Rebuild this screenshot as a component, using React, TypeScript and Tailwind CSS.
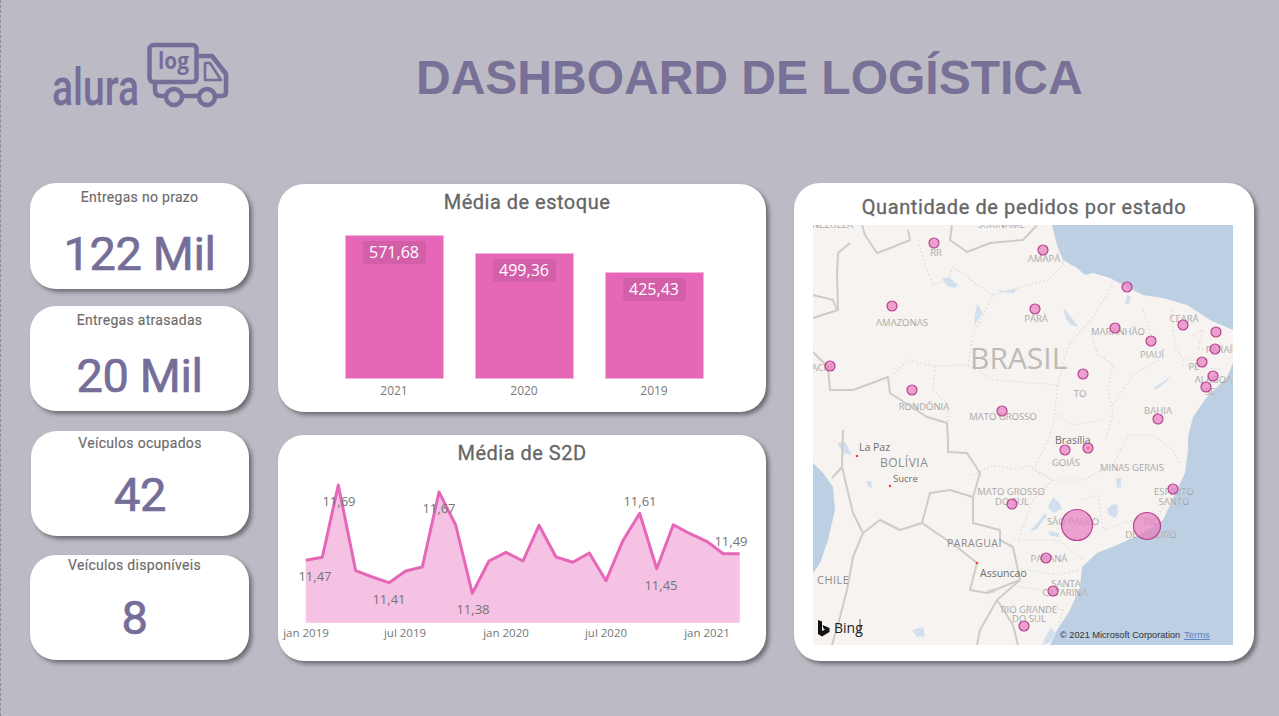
import React from "react";

function KpiCard({ label, value, cls, labelCls, valueCls }: { label: string; value: string; cls: string; labelCls: string; valueCls: string }) {
  return (
    <div className={`bg-white rounded-[26px] shadow-[3px_3px_4px_rgba(0,0,0,0.42)] flex flex-col items-center ${cls}`}>
      <div className={`text-[14px] leading-[16px] tracking-[0.3px] text-[#6e6a6a] font-['Roboto',sans-serif] [-webkit-text-stroke:0.15px_#6e6a6a] ${labelCls}`}>{label}</div>
      <div className={`text-[47px] leading-[56px] text-[#756e99] font-['Roboto',sans-serif] tracking-[-0.4px] [-webkit-text-stroke:0.7px_#756e99] ${valueCls}`}>{value}</div>
    </div>
  );
}

function Bar({ h, value, year }: { h: string; value: string; year: string }) {
  return (
    <div className="flex flex-col items-center justify-end w-[99px]">
      <div className={`w-[99px] bg-[#e667b8] border border-[#f3b5dc] flex justify-center pt-[5px] ${h}`}>
        <div className="w-[63px] h-[23px] rounded-[3px] bg-[#d35fa9] text-white text-[16px] leading-[23px] text-center font-['Open_Sans',sans-serif]">{value}</div>
      </div>
      <div className="mt-[4px] h-[16px] text-[12px] leading-[16px] text-[#7a7a7a] font-['Open_Sans',sans-serif]">{year}</div>
    </div>
  );
}

const zp: [number, number][] = [
  [107, 391], [157, 382], [205, 165], [257, 422], [307, 441], [357, 458], [407, 423], [457, 411], [507, 186], [557, 285],
  [607, 490], [657, 393], [708, 367], [759, 393], [807, 286], [858, 381], [908, 397], [958, 369], [1008, 452], [1058, 333],
  [1109, 250], [1160, 416], [1210, 284], [1260, 311], [1310, 334], [1360, 371], [1409, 371],
];
const pts = zp.map(([x, y]) => `${(x / 3 - 8).toFixed(1)},${(y / 3 - 5).toFixed(1)}`).join(" ");

function LineChart() {
  const labels: [string, number, number][] = [
    ["11,69", 61, 71], ["11,47", 37, 146], ["11,41", 111, 169], ["11,67", 161, 78], ["11,38", 195, 179],
    ["11,61", 362, 71], ["11,45", 383, 155], ["11,49", 453, 111],
  ];
  const ticks: [string, number][] = [["jan 2019", 28], ["jul 2019", 127], ["jan 2020", 228], ["jul 2020", 328], ["jan 2021", 429]];
  return (
    <svg width="488" height="190" viewBox="0 36 488 190" className="block">
      <polygon points={`27.7,187.7 ${pts} 461.7,187.7`} fill="#f5c2e3" />
      <polyline points={pts} fill="none" stroke="#e667b8" strokeWidth="3" strokeLinejoin="round" />
      {labels.map(([t, x, y]) => (
        <text key={t} x={x} y={y} textAnchor="middle" fontSize="13" fill="#747474" fontFamily="Open Sans, sans-serif">{t}</text>
      ))}
      {ticks.map(([t, x]) => (
        <text key={t} x={x} y={202} textAnchor="middle" fontSize="11.5" fill="#777" fontFamily="Open Sans, sans-serif">{t}</text>
      ))}
    </svg>
  );
}

function MapSvg() {
  const bubbles: [number, number, number][] = [
    [121, 18, 5], [230, 25, 5], [314, 62, 5], [79, 81, 5], [222, 84, 5], [302, 103, 5], [370, 100, 5], [403, 107, 5],
    [338, 116, 5], [402, 124, 5], [389, 137, 5], [400, 151, 5], [393, 162, 5], [270, 149, 5], [17, 141, 5], [99, 165, 5],
    [189, 186, 5], [345, 194, 5], [252, 225, 5], [275, 223, 5], [360, 264, 5], [199, 279, 5], [264, 300, 15.5], [334, 301, 13.5],
    [233, 333, 5], [240, 366, 5], [211, 401, 5],
  ];
  const labels: [string, number, number][] = [
    ["RR", 123, 31], ["AMAPÁ", 231, 37], ["AMAZONAS", 89, 101], ["PARÁ", 223, 97], ["MARANHÃO", 305, 110], ["CEARÁ", 371, 97], ["PIAUÍ", 339, 133],
    ["PARAÍBA", 412, 128], ["PE", 381, 145], ["ALAGOAS", 403, 158], ["SE", 397, 170], ["TO", 267, 172], ["BAHIA", 345, 189], ["RONDÔNIA", 111, 185],
    ["MATO GROSSO", 190, 195], ["ACRE", 10, 146], ["GOIÁS", 253, 241], ["MINAS GERAIS", 319, 246], ["MATO GROSSO", 198, 270], ["DO SUL", 199, 280],
    ["ESPÍRITO", 361, 270], ["SANTO", 361, 280], ["SÃO PAULO", 260, 300], ["RIO", 339, 300], ["DE JANEIRO", 338, 313], ["PARANÁ", 236, 337], ["SANTA", 253, 362],
    ["CATARINA", 252, 371], ["RIO GRANDE", 216, 388], ["DO SUL", 216, 397], ["SURINAME", 188, 3], ["VENEZUELA", 14, 3],
  ];
  return (
    <svg width="420" height="420" viewBox="0 0 420 420" className="block ml-[-2px]">
      <rect width="420" height="420" fill="#f6f3f0" />
      <path d="M239 0 L244 20 L250 35 L264 43 L272 50 L280 48 L297 53 L314 62 L330 70 L350 73 L374 80 L397 95 L420 105 L420 0 Z" fill="#bdcfe3" />
      <path d="M420 138 L414 152 L394 172 L380 192 L375 212 L375 225 L372 248 L364 265 L350 295 L330 308 L304 320 L284 328 L269 342 L267 362 L257 385 L244 405 L237 420 L420 420 Z" fill="#bdcfe3" />
      <path d="M0 238 L10 248 L20 262 L22 285 L15 315 L7 338 L0 348 Z" fill="#bdcfe3" />
      <g fill="#d2e0ee">
        <path d="M129 54 L136 52 L145 60 L142 63 L134 61 Z" />
        <path d="M185 64 L190 66 L197 65 L204 63 L201 68 L187 67 Z" />
        <path d="M164 78 L170 88 L164 96 L161 102 L162 90 Z" />
        <path d="M250 82 L258 92 L266 102 L258 100 L253 94 Z" />
        <path d="M314 70 L318 72 L316 79 L312 79 Z" />
        <path d="M340 163 L350 157 L358 151 L352 158 L344 164 Z" />
        <path d="M24 218 L32 217 L37 226 L39 230 L30 228 Z" />
        <path d="M53 256 L58 256 L59 263 L55 261 Z" />
        <path d="M240 272 L246 277 L249 284 L240 288 L235 282 Z" />
        <path d="M232 288 L234 291 L223 305 L217 306 L226 296 Z" />
        <path d="M298 280 L304 279 L305 287 L303 293 L296 290 L294 285 Z" />
        <path d="M303 253 L308 253 L308 262 L304 263 Z" />
        <path d="M235 306 L246 308 L246 312 L238 311 Z" />
        <path d="M99 405 L110 402 L112 411 L104 412 Z" />
        <path d="M174 365 L183 363 L182 368 L176 368 Z" />
        <path d="M238 403 L243 408 L236 418 L229 420 L233 411 Z" />
      </g>
      <g fill="none" stroke="#cfccc8" strokeWidth="2" strokeLinejoin="round" className="blur-[0.4px]">
        <path d="M49 0 L52 10 L64 28 L80 22 L97 15 L95 5" />
        <path d="M37 18 L25 28 L24 50 L25 85 L0 93" />
        <path d="M0 70 L20 75 L24 85" />
        <path d="M139 0 L137 15 L154 27 L177 18 L210 15 L224 0" />
        <path d="M0 127 L15 142 L17 165 L40 165 L75 152 L77 168 L114 192 L134 198 L135 215 L135 227 L154 228 L167 248 L160 272 L137 265 L117 268 L109 298 L144 322 L164 338 L157 365 L174 368 L207 355 L200 322 L187 315 L187 305 L160 298 L160 272" />
        <path d="M30 205 L29 242 L40 288 L50 308 L67 295 L87 305 L109 298" />
        <path d="M29 242 L19 253" />
        <path d="M50 308 L40 332 L34 365 L27 392 L19 420" />
        <path d="M207 355 L184 375 L167 405 L164 420" />
        <path d="M184 375 L200 400 L205 420" />
      </g>
      <g fill="none" stroke="#dcd8d4" strokeWidth="1.2" strokeDasharray="1.5 2.5">
        <path d="M105 15 L112 40 L120 60 L135 55 L140 42 L165 60 L180 70 L160 110 L155 140 L120 141 L95 135 L80 150" />
        <path d="M180 70 L215 60 L235 55 L250 40 L250 10" />
        <path d="M155 140 L180 155 L245 160 L255 120 L278 95 L300 60" />
        <path d="M278 110 L285 130 L300 140 L295 165 L300 190 L292 215" />
        <path d="M330 85 L335 100 L345 135 L320 150 L300 180" />
        <path d="M358 85 L362 120 L370 135 L395 135" />
        <path d="M380 110 L390 105 L385 125 L410 120" />
        <path d="M370 140 L410 145 M385 155 L400 170" />
        <path d="M122 141 L120 165 L135 180 L135 198" />
        <path d="M245 160 L240 200 L235 215 L220 245 L240 255" />
        <path d="M245 190 L260 200 L290 195" />
        <path d="M160 250 L180 240 L205 245 L215 240 L240 255 L270 255 L300 240 L315 210 L340 210 L360 225 L368 240" />
        <path d="M240 255 L220 275 L205 315 L245 315 L270 335" />
        <path d="M285 270 L290 305 L320 295 L345 290 L362 265" />
        <path d="M270 275 L285 270" />
        <path d="M200 343 L245 350 L265 345 M205 362 L258 368" />
        <path d="M210 380 L250 385 L245 400" />
      </g>
      <g fontFamily="Open Sans, sans-serif" fill="#8b8b8b">
        {labels.map(([t, x, y], i) => (
          <text key={i} x={x} y={y} textAnchor="middle" fontSize="9.5" stroke="#f6f3f0" strokeWidth="0.2">{t}</text>
        ))}
        <text x="157" y="144" fontSize="30" fill="#bdbbb9">BRASIL</text>
        <text x="67" y="242" fontSize="12" letterSpacing="0.5" fill="#8c8c8c">BOLÍVIA</text>
        <text x="134" y="322" fontSize="10.5" letterSpacing="0.5" fill="#8c8c8c">PARAGUAI</text>
        <text x="4" y="359" fontSize="11" letterSpacing="0.5" fill="#8c8c8c">CHILE</text>
        <text x="46" y="226" fontSize="10.5" fill="#6e6e6e">La Paz</text>
        <text x="80" y="257" fontSize="9.5" fill="#6e6e6e">Sucre</text>
        <text x="167" y="352" fontSize="10.5" fill="#6e6e6e">Assuncao</text>
        <text x="242" y="219" fontSize="10.5" fill="#6e6e6e">Brasília</text>
      </g>
      <g fill="#f0473a">
        <circle cx="44" cy="231" r="1.3" />
        <circle cx="77" cy="261" r="1.3" />
        <circle cx="164" cy="338" r="1.3" />
      </g>
      {bubbles.map(([x, y, r], i) => (
        <circle key={i} cx={x} cy={y} r={r} fill="#e67fc2" fillOpacity="0.72" stroke="#b8418f" strokeWidth="1.2" />
      ))}
      <circle cx="275" cy="223" r="1" fill="#f0473a" />
      <path d="M5 395 L9 396.5 L9 406 L12 404.5 L10.5 403.5 L9.5 400 L16.5 403 L16.5 407 L9 411.5 L5 409 Z" fill="#111" />
      <text x="21" y="408" fontSize="14" fill="#222" fontFamily="Open Sans, sans-serif">Bing</text>
      <path d="M47 394 V409" stroke="#333" strokeWidth="0.8" />
      <text x="247" y="413" fontSize="9.2" fill="#333" fontFamily="Liberation Sans, sans-serif">© 2021 Microsoft Corporation</text>
      <text x="371" y="413" fontSize="9.5" fill="#5c7fbf" textDecoration="underline" fontFamily="Liberation Sans, sans-serif">Terms</text>
    </svg>
  );
}

function Logo() {
  return (
    <svg width="182" height="70" viewBox="50 40 182 70" className="block shrink-0">
      <g fill="none" stroke="#756e99" strokeWidth="4.5" strokeLinejoin="round" strokeLinecap="round">
        <rect x="149.5" y="45" width="47" height="37" rx="4" />
        <path d="M198 56 H212 L226 74 V92 Q226 96 222 96 H216" />
        <path d="M155 84 V90 Q155 96 161 96 H165 M183 96 H198" />
        <circle cx="174" cy="97" r="8" />
        <circle cx="207" cy="97" r="8" />
        <path d="M205 63 H210 L221 80 H205 Z" strokeWidth="2.5" />
      </g>
      <text x="158" y="69" fontSize="23" fontWeight="700" fill="#756e99" fontFamily="Open Sans, sans-serif" textLength="31" lengthAdjust="spacingAndGlyphs">log</text>
      <text x="52" y="105" fontSize="52" fontWeight="500" fill="#756e99" fontFamily="Roboto, sans-serif" textLength="87" lengthAdjust="spacingAndGlyphs">alura</text>
    </svg>
  );
}

export default function App() {
  return (
    <div className="w-[1279px] h-[716px] bg-[#bcbac4] overflow-hidden border-l border-dashed border-[#8f8d99] flex flex-col">
      <header className="h-[183px] flex items-start pl-[49px] pt-[40px] shrink-0">
        <Logo />
        <h1 className="ml-[184px] mt-[10px] text-[48px] leading-[56px] font-bold text-[#787096] font-['Liberation_Sans',sans-serif] whitespace-nowrap">DASHBOARD DE LOGÍSTICA</h1>
      </header>
      <main className="flex items-start pl-[29px]">
        <div className="w-[219px] flex flex-col shrink-0">
          <KpiCard label="Entregas no prazo" value="122 Mil" cls="h-[106px]" labelCls="mt-[6px]" valueCls="mt-[21px]" />
          <KpiCard label="Entregas atrasadas" value="20 Mil" cls="h-[105px] mt-[17px]" labelCls="mt-[6px]" valueCls="mt-[20px]" />
          <KpiCard label="Veículos ocupados" value="42" cls="h-[105px] mt-[20px] ml-[1px]" labelCls="mt-[4px]" valueCls="mt-[16px]" />
          <KpiCard label="Veículos disponíveis" value="8" cls="h-[105px] mt-[19px] pr-[10px]" labelCls="mt-[2px]" valueCls="mt-[17px]" />
        </div>
        <div className="w-[488px] ml-[29px] mt-[1px] flex flex-col shrink-0">
          <section className="h-[228px] bg-white rounded-[26px] shadow-[3px_3px_4px_rgba(0,0,0,0.42)] flex flex-col">
            <h2 className="h-[34px] pt-[4px] text-center text-[20px] leading-[28px] tracking-[0.5px] text-[#666] font-['Roboto',sans-serif] [-webkit-text-stroke:0.3px_#666] ml-[10px]">Média de estoque</h2>
            <div className="h-[181px] flex items-end justify-center gap-[31px] pl-[4px]">
              <Bar h="h-[144px]" value="571,68" year="2021" />
              <Bar h="h-[126px]" value="499,36" year="2020" />
              <Bar h="h-[107px]" value="425,43" year="2019" />
            </div>
          </section>
          <section className="h-[226px] mt-[23px] bg-white rounded-[26px] shadow-[3px_3px_4px_rgba(0,0,0,0.42)] flex flex-col">
            <h2 className="h-[36px] pt-[4px] text-center text-[20px] leading-[28px] tracking-[0.5px] text-[#666] font-['Roboto',sans-serif] [-webkit-text-stroke:0.3px_#666]">Média de S2D</h2>
            <LineChart />
          </section>
        </div>
        <section className="w-[460px] h-[478px] ml-[28px] bg-white rounded-[26px] shadow-[3px_3px_4px_rgba(0,0,0,0.42)] flex flex-col items-center shrink-0">
          <h2 className="h-[42px] pt-[10px] text-[20px] leading-[28px] tracking-[0.6px] text-[#666] font-['Roboto',sans-serif] [-webkit-text-stroke:0.3px_#666]">Quantidade de pedidos por estado</h2>
          <MapSvg />
        </section>
      </main>
    </div>
  );
}
